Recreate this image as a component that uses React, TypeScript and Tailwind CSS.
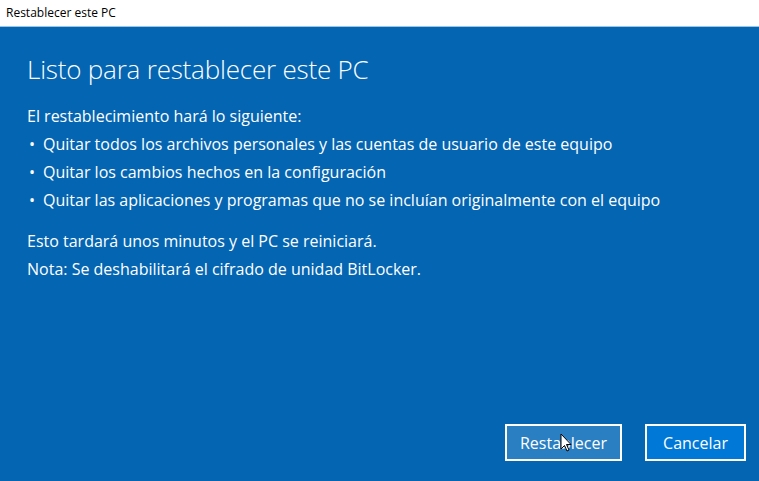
const ITEMS = [
  'Quitar todos los archivos personales y las cuentas de usuario de este equipo',
  'Quitar los cambios hechos en la configuración',
  'Quitar las aplicaciones y programas que no se incluían originalmente con el equipo',
]

export default function App() {
  return (
    <div className="flex h-[481px] w-[759px] flex-col overflow-hidden bg-white font-['Open_Sans',sans-serif]">
      {/* title bar */}
      <div className="flex h-[27px] items-center border-b border-[#9cc6e8] px-[6px] text-[12px] text-black">
        Restablecer este PC
      </div>

      <div className="relative flex flex-1 flex-col bg-[#0465b2] pl-[27px] pr-[13px] text-white">
        <h1 className="mt-[24px] text-[26px] font-light leading-[36px] tracking-[-0.2px]">
          Listo para restablecer este PC
        </h1>

        <div className="mt-[15px] text-[16px] leading-[28px]">
          <p>El restablecimiento hará lo siguiente:</p>
          <ul>
            {ITEMS.map((item) => (
              <li className="flex" key={item}>
                <span className="w-[16px] pl-[2px]">•</span>
                <span>{item}</span>
              </li>
            ))}
          </ul>
          <p className="mt-[13px]">Esto tardará unos minutos y el PC se reiniciará.</p>
          <p>Nota: Se deshabilitará el cifrado de unidad BitLocker.</p>
        </div>

        <div className="mt-auto mb-[20px] flex justify-end gap-[23px]">
          <button className="h-[37px] w-[117px] border-2 border-white bg-[#2a7ec2] text-[16px] text-white">
            Restablecer
          </button>
          <button className="h-[37px] w-[101px] border-2 border-white bg-[#0078d7] text-[16px] text-white">
            Cancelar
          </button>
        </div>

        {/* mouse pointer */}
        <svg
          className="absolute left-[560px] top-[406px]"
          width="12"
          height="19"
          viewBox="0 0 12 19"
        >
          <path
            d="M1 1 L1 16 L4.5 12.5 L7 18 L9 17 L6.5 11.5 L11 11.5 Z"
            fill="white"
            stroke="black"
            strokeWidth="1"
            strokeLinejoin="round"
          />
        </svg>
      </div>
    </div>
  )
}
